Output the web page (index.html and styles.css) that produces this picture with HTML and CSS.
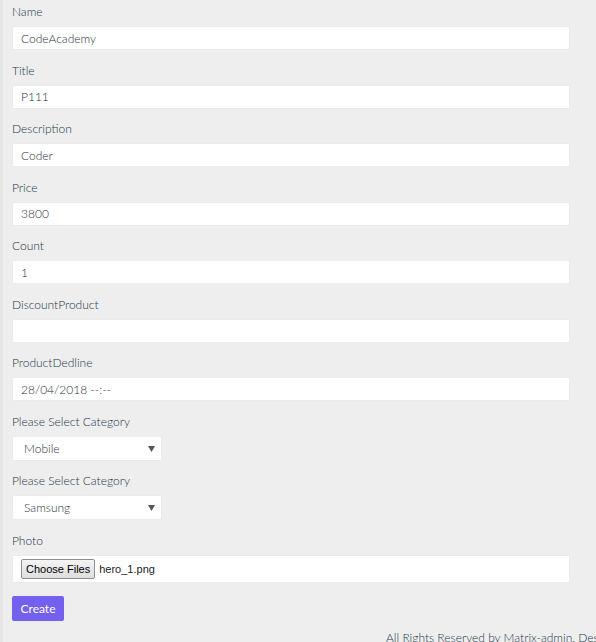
FILE: index.html
```html
<!DOCTYPE html>
<html>
<head>
<meta charset="utf-8">
<link rel="stylesheet" href="styles.css">
</head>
<body>
<div class="page">
  <form class="form">
    <div class="group">
      <label class="label">Name</label>
      <input class="control" type="text" value="CodeAcademy">
    </div>
    <div class="group">
      <label class="label">Title</label>
      <input class="control" type="text" value="P111">
    </div>
    <div class="group">
      <label class="label">Description</label>
      <input class="control" type="text" value="Coder">
    </div>
    <div class="group">
      <label class="label">Price</label>
      <input class="control" type="text" value="3800">
    </div>
    <div class="group">
      <label class="label">Count</label>
      <input class="control" type="text" value="1">
    </div>
    <div class="group">
      <label class="label">DiscountProduct</label>
      <input class="control" type="text" value="">
    </div>
    <div class="group">
      <label class="label">ProductDedline</label>
      <input class="control" type="text" value="28/04/2018 --:--">
    </div>
    <div class="group">
      <label class="label">Please Select Category</label>
      <select class="select"><option>Mobile</option></select>
    </div>
    <div class="group">
      <label class="label">Please Select Category</label>
      <select class="select"><option>Samsung</option></select>
    </div>
    <div class="group">
      <label class="label">Photo</label>
      <div class="file">
        <span class="file-btn">Choose Files</span>
        <span class="file-name">hero_1.png</span>
      </div>
    </div>
    <button class="btn" type="button">Create</button>
  </form>
  <footer class="footer">All Rights Reserved by Matrix-admin. Designed and Developed by WrapPixel.</footer>
</div>
</body>
</html>
```
FILE: styles.css
```css
html, body {
  margin: 0;
  padding: 0;
  background: #eeeeee;
  height: 100%;
  overflow: hidden;
}
body {
  font-family: Lato, "Liberation Sans", sans-serif;
  font-size: 12px;
  font-weight: 300;
  color: #22364a;
}
.page {
  border-left: 3px solid #e6e6e6;
  padding: 3px 0 0 9px;
  height: 100%;
  box-sizing: border-box;
}
.form {
  width: 558px;
}
.group {
  display: flex;
  flex-direction: column;
  margin-bottom: 11.5px;
}
.label {
  display: block;
  line-height: 18px;
  margin-bottom: 5px;
  color: #22364a;
}
.control {
  box-sizing: border-box;
  height: 24px;
  width: 100%;
  border: 1px solid #e9ecef;
  background: #fff;
  padding: 0 8px;
  font-family: inherit;
  font-weight: 300;
  font-size: 12px;
  color: #2b2f3a;
  outline: none;
  margin: 0;
}
.select {
  box-sizing: border-box;
  width: 150px;
  height: 25px;
  border: 1px solid #e9ecef;
  border-radius: 2px;
  background: #fff url("data:image/svg+xml;utf8,<svg xmlns='http://www.w3.org/2000/svg' width='7' height='7'><path d='M0 1h7L3.5 7z' fill='%23555'/></svg>") no-repeat right 6px center;
  -webkit-appearance: none;
  appearance: none;
  padding: 0 0 0 11px;
  font-family: inherit;
  font-weight: 300;
  font-size: 12px;
  color: #2b2f3a;
  margin: 0;
}
.file {
  box-sizing: border-box;
  height: 28px;
  background: #fff;
  border: 1px solid #e9ecef;
  display: flex;
  align-items: center;
  padding-left: 8px;
  gap: 4px;
  font-family: Arial, "Liberation Sans", sans-serif;
  font-weight: 400;
  font-size: 11px;
  color: #222;
}
.file-btn {
  box-sizing: border-box;
  height: 20px;
  line-height: 18px;
  padding: 0 4px;
  border: 1px solid #8f8f8f;
  border-radius: 2px;
  background: linear-gradient(#f4f4f4, #dedede);
  color: #000;
}
.btn {
  margin-top: 2px;
  height: 25px;
  width: 52px;
  border: none;
  border-radius: 2px;
  background: #7460ee;
  color: #fff;
  font-family: inherit;
  font-weight: 400;
  font-size: 12px;
  padding: 0;
  cursor: pointer;
}
.footer {
  margin: 9px 0 0 374px;
  white-space: nowrap;
  color: #22364a;
  font-size: 12px;
}
```
